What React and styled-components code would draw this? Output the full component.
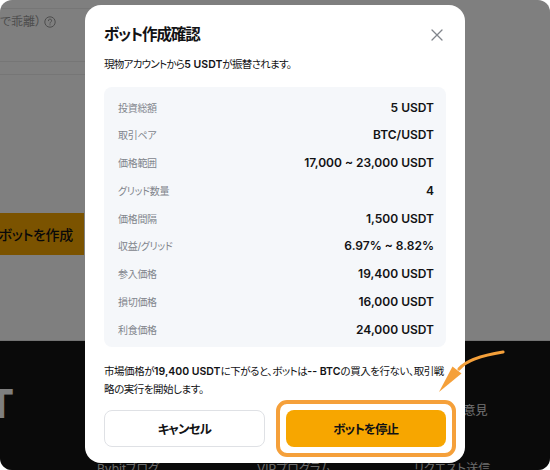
import React from "react";
import styled, { createGlobalStyle } from "styled-components";

const GlobalStyle = createGlobalStyle`
  html, body { margin: 0; padding: 0; background: #ffffff; }
  body {
    font-family: Inter, "Noto Sans CJK JP", sans-serif;
    font-feature-settings: "palt";
    -webkit-font-smoothing: antialiased;
  }
  * { box-sizing: border-box; }
`;

const Frame = styled.div`
  position: relative;
  width: 550px;
  height: 470px;
  border-radius: 12px;
  overflow: hidden;
  background: #ffffff;
  display: flex;
  flex-direction: column;
`;

/* ---------- underlying page ---------- */
const Page = styled.div`
  height: 341px;
  flex-shrink: 0;
  background: #ffffff;
  border-bottom: 1px solid #e6e6e6;
  display: flex;
  flex-direction: column;
`;

const LeftPanel = styled.div`
  width: 420px;
  display: flex;
  flex-direction: column;
`;

const Divider = styled.div`
  height: 1px;
  background: #ececec;
  margin-top: ${(p) => p.$top}px;
`;

const HintRow = styled.div`
  display: flex;
  align-items: center;
  gap: 3px;
  height: 26px;
  font-size: 12px;
  line-height: 26px;
  color: #9a9a9a;
`;

const HelpIcon = () => (
  <svg width="12" height="12" viewBox="0 0 12 12" fill="none">
    <circle cx="6" cy="6" r="5.2" stroke="#9a9a9a" strokeWidth="1" />
    <path d="M4.4 4.7a1.6 1.6 0 1 1 2.3 1.4c-.5.3-.7.6-.7 1.1" stroke="#9a9a9a" strokeWidth="1" strokeLinecap="round" />
    <circle cx="6" cy="8.8" r=".6" fill="#9a9a9a" />
  </svg>
);

const CreateButton = styled.div`
  margin-top: 138px;
  width: 84px;
  height: 42px;
  background: #f7a600;
  display: flex;
  align-items: center;
  justify-content: flex-end;
  padding-right: 11px;
  font-size: 14px;
  font-weight: 500;
  letter-spacing: -0.3px;
  color: #121214;
  white-space: nowrap;
`;

const Footer = styled.div`
  flex: 1;
  background: #151515;
  display: flex;
  flex-direction: column;
`;

const FooterMain = styled.div`
  height: 120px;
  display: flex;
`;

const LogoClip = styled.div`
  width: 14px;
  overflow: hidden;
  display: flex;
  justify-content: flex-end;
  margin-top: 43px;
  height: 40px;
  font-family: Inter, sans-serif;
  font-size: 39px;
  font-weight: 800;
  line-height: 40px;
  color: #ffffff;
  white-space: nowrap;
`;

const FooterCol = styled.div`
  margin-left: 439px;
  margin-top: 62px;
  font-size: 12px;
  line-height: 16px;
  color: #e4e4e4;
  white-space: nowrap;
`;

const LinksRow = styled.div`
  display: grid;
  grid-template-columns: 160px 157px auto;
  padding-left: 97px;
  font-size: 12px;
  line-height: 16px;
  color: #d8d8d8;
  white-space: nowrap;
`;

const Overlay = styled.div`
  position: absolute;
  inset: 0;
  background: rgba(0, 0, 0, 0.5);
`;

/* ---------- modal ---------- */
const Modal = styled.div`
  position: absolute;
  left: 85px;
  top: 5px;
  width: 380px;
  background: #ffffff;
  border-radius: 16px;
  padding: 19px 19px 16px;
  display: flex;
  flex-direction: column;
`;

const Header = styled.div`
  display: flex;
  align-items: center;
  justify-content: space-between;
  height: 22px;
`;

const Title = styled.h2`
  margin: 0;
  font-size: 15.5px;
  line-height: 22px;
  font-weight: 700;
  letter-spacing: -1.1px;
  color: #121214;
`;

const CloseButton = styled.button`
  border: 0;
  background: none;
  padding: 0;
  margin-right: 3px;
  width: 12px;
  height: 12px;
  display: flex;
  cursor: pointer;
`;

const Subtitle = styled.p`
  margin: 11px 0 0;
  font-size: 10.5px;
  line-height: 16px;
  letter-spacing: -0.7px;
  color: #121214;
  b { font-weight: 600; letter-spacing: 0; }
`;

const InfoBox = styled.div`
  margin-top: 14px;
  background: #f5f7fa;
  border-radius: 8px;
  padding: 12px 12px 10px 14px;
  display: flex;
  flex-direction: column;
  gap: 11.75px;
`;

const Row = styled.div`
  display: flex;
  align-items: center;
  justify-content: space-between;
  height: 16px;
`;

const Label = styled.span`
  font-size: 10px;
  letter-spacing: -0.3px;
  color: #81858c;
`;

const Value = styled.span`
  font-size: 12px;
  font-weight: 600;
  color: #121214;
`;

const Notice = styled.div`
  margin: 16px -12px 0 0;
  font-size: 10.5px;
  line-height: 18px;
  letter-spacing: -0.45px;
  color: #121214;
  display: flex;
  flex-direction: column;
  b { font-weight: 600; letter-spacing: 0; }
`;

const NoticeLine = styled.span`
  white-space: nowrap;
`;

const Buttons = styled.div`
  margin-top: 11px;
  display: grid;
  grid-template-columns: 1fr 1fr;
  gap: 21px;
  height: 37px;
`;

const BaseButton = styled.button`
  height: 37px;
  border-radius: 8px;
  font-family: inherit;
  font-feature-settings: "palt";
  font-size: 12.5px;
  font-weight: 700;
  letter-spacing: -0.9px;
  color: #121214;
  cursor: pointer;
`;

const CancelButton = styled(BaseButton)`
  background: #ffffff;
  border: 1px solid #dfe1e5;
`;

const Highlight = styled.div`
  position: relative;
  display: flex;
  &::after {
    content: "";
    position: absolute;
    inset: -10px;
    border: 4px solid #f5a03a;
    border-radius: 11px;
    pointer-events: none;
  }
`;

const StopButton = styled(BaseButton)`
  flex: 1;
  background: #f7a600;
  border: 0;
`;

const ArrowSvg = styled.svg`
  position: absolute;
  left: 430px;
  top: 345px;
  pointer-events: none;
`;

const rows = [
  ["投資総額", "5 USDT"],
  ["取引ペア", "BTC/USDT"],
  ["価格範囲", "17,000 ~ 23,000 USDT"],
  ["グリッド数量", "4"],
  ["価格間隔", "1,500 USDT"],
  ["収益/グリッド", "6.97% ~ 8.82%"],
  ["参入価格", "19,400 USDT"],
  ["損切価格", "16,000 USDT"],
  ["利食価格", "24,000 USDT"],
];

export default function App() {
  return (
    <>
      <GlobalStyle />
      <Frame>
        <Page>
          <LeftPanel>
            <Divider $top={8} />
            <HintRow>
              <span>で乖離）</span>
              <HelpIcon />
            </HintRow>
            <Divider $top={26} />
            <Divider $top={12} />
            <CreateButton>ボットを作成</CreateButton>
          </LeftPanel>
        </Page>
        <Footer>
          <FooterMain>
            <LogoClip>BYBIT</LogoClip>
            <FooterCol>ご意見</FooterCol>
          </FooterMain>
          <LinksRow>
            <span>Bybitブログ</span>
            <span>VIPプログラム</span>
            <span>リクエスト送信</span>
          </LinksRow>
        </Footer>

        <Overlay />

        <Modal>
          <Header>
            <Title>ボット作成確認</Title>
            <CloseButton aria-label="close">
              <svg width="12" height="12" viewBox="0 0 12 12" fill="none">
                <path d="M1 1L11 11M11 1L1 11" stroke="#81858c" strokeWidth="1.3" strokeLinecap="round" />
              </svg>
            </CloseButton>
          </Header>
          <Subtitle>
            現物アカウントから<b>5 USDT</b>が振替されます。
          </Subtitle>
          <InfoBox>
            {rows.map(([l, v]) => (
              <Row key={l}>
                <Label>{l}</Label>
                <Value>{v}</Value>
              </Row>
            ))}
          </InfoBox>
          <Notice>
            <NoticeLine>
              市場価格が<b>19,400 USDT</b>に下がると、ボットは<b>-- BTC</b>の買入を行ない、取引戦
            </NoticeLine>
            <NoticeLine>略の実行を開始します。</NoticeLine>
          </Notice>
          <Buttons>
            <CancelButton>キャンセル</CancelButton>
            <Highlight>
              <StopButton>ボットを停止</StopButton>
            </Highlight>
          </Buttons>
        </Modal>

        <ArrowSvg width="80" height="55" viewBox="0 0 80 55" fill="none">
          <path d="M73 7 Q38.5 12.4 29 24" stroke="#f5a03a" strokeWidth="3.2" strokeLinecap="round" />
          <path d="M9 47 L31.5 28.5 L22.5 21.5 Z" fill="#f5a03a" />
        </ArrowSvg>
      </Frame>
    </>
  );
}
